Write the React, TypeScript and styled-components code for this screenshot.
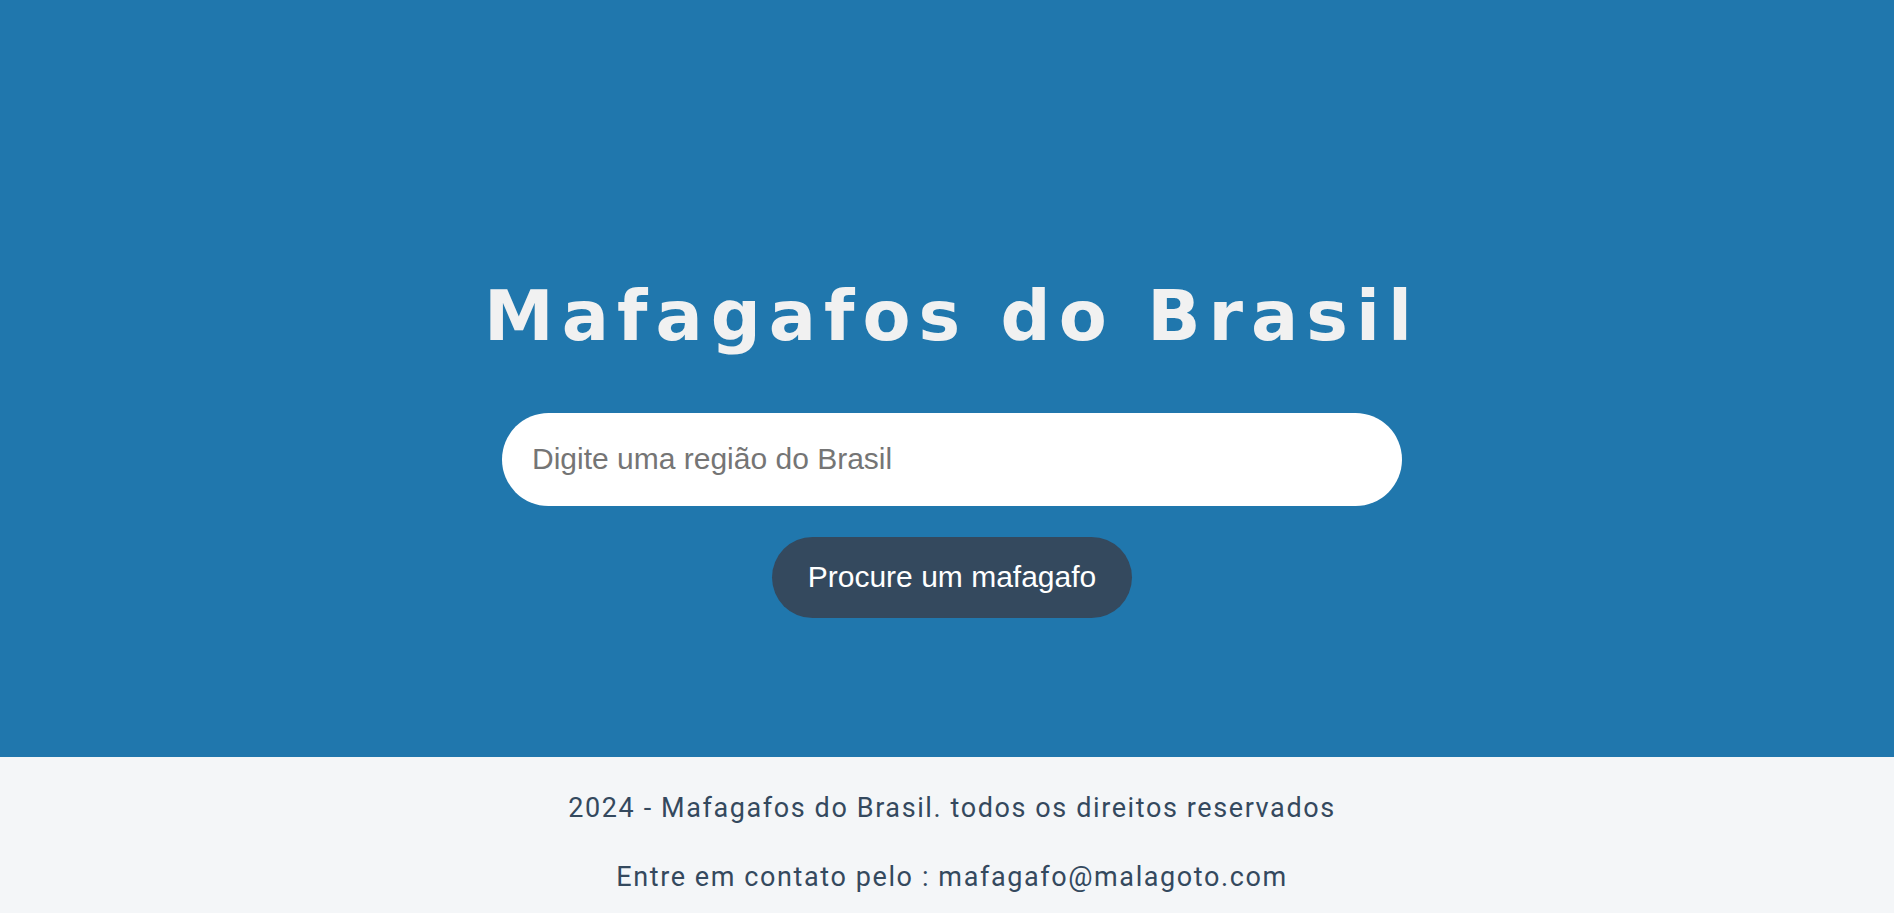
import React from "react";
import styled, { createGlobalStyle } from "styled-components";

const GlobalStyle = createGlobalStyle`
  html, body { margin: 0; padding: 0; }
  body { background: #f4f6f8; font-family: "Liberation Sans", Arial, sans-serif; }
  * { box-sizing: border-box; }
`;

const Page = styled.div`
  display: flex;
  flex-direction: column;
  min-height: 913px;
`;

const Hero = styled.header`
  height: 757px;
  background: #2077ad;
  display: flex;
  flex-direction: column;
  align-items: center;
  justify-content: center;
  padding: 133px 0 0 10px;
`;

const Title = styled.h1`
  margin: 0 0 54px;
  font-family: "DejaVu Sans", sans-serif;
  font-weight: 700;
  font-size: 70px;
  line-height: 86px;
  letter-spacing: 8px;
  color: #f1f1f1;
`;

const SearchInput = styled.input`
  width: 900px;
  height: 93px;
  border: none;
  outline: none;
  border-radius: 47px;
  background: #ffffff;
  padding: 0 30px;
  font-family: "Liberation Sans", Arial, sans-serif;
  font-size: 30px;
  color: #333;
  &::placeholder { color: #757575; }
`;

const SearchButton = styled.button`
  margin-top: 31px;
  width: 360px;
  height: 81px;
  border: none;
  border-radius: 41px;
  background: #34495e;
  color: #ffffff;
  font-family: "Liberation Sans", Arial, sans-serif;
  font-size: 30px;
  cursor: pointer;
`;

const Footer = styled.footer`
  flex: 1;
  background: #f4f6f8;
  display: flex;
  flex-direction: column;
  align-items: center;
  padding: 34px 0 0 10px;
  gap: 35px;
`;

const FooterText = styled.p`
  margin: 0;
  font-family: "Roboto", "DejaVu Sans", sans-serif;
  font-size: 27px;
  line-height: 34px;
  color: #34495e;
  letter-spacing: 1.6px;
`;

export default function App() {
  return (
    <Page>
      <GlobalStyle />
      <Hero>
        <Title>Mafagafos do Brasil</Title>
        <SearchInput placeholder="Digite uma região do Brasil" />
        <SearchButton>Procure um mafagafo</SearchButton>
      </Hero>
      <Footer>
        <FooterText>2024 - Mafagafos do Brasil. todos os direitos reservados</FooterText>
        <FooterText>Entre em contato pelo : mafagafo@malagoto.com</FooterText>
      </Footer>
    </Page>
  );
}
